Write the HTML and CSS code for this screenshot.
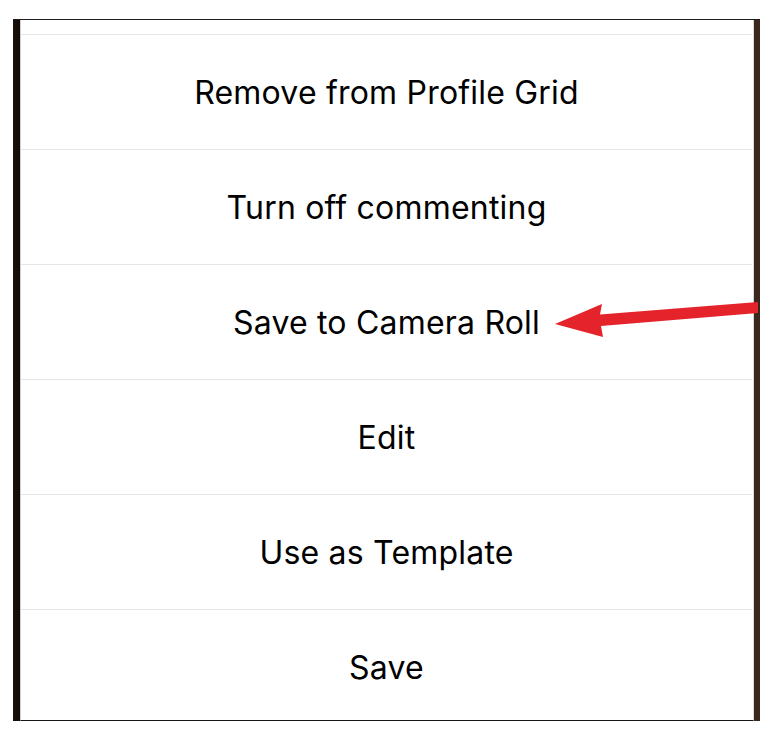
FILE: index.html
```html
<!DOCTYPE html>
<html>
<head>
<meta charset="utf-8">
<link rel="stylesheet" href="styles.css">
</head>
<body>
<div class="page">
  <div class="frame">
    <div class="sheet">
      <div class="top-gap"></div>
      <div class="item">Remove from Profile Grid</div>
      <div class="item">Turn off commenting</div>
      <div class="item">Save to Camera Roll</div>
      <div class="item">Edit</div>
      <div class="item">Use as Template</div>
      <div class="item">Save</div>
    </div>
  </div>
  <svg class="arrow" width="769" height="739" viewBox="0 0 769 739">
    <polygon points="555,324 602,304 600,314.5 758,302 758,313 601,326 603,337" fill="#e5232b"/>
  </svg>
</div>
</body>
</html>
```
FILE: styles.css
```css
html, body {
  margin: 0;
  padding: 0;
  background: #ffffff;
}
.page {
  position: relative;
  width: 769px;
  height: 739px;
  padding: 19px 0 0 13px;
  box-sizing: border-box;
}
.frame {
  width: 747px;
  height: 702px;
  box-sizing: border-box;
  border-top: 1px solid #1c1c1c;
  padding: 0 6px 0 7px;
  background: linear-gradient(90deg, #1a0f0a 0, #120a07 7px, #3a281d 7px, #3a281d 100%);
}
.sheet {
  height: 701px;
  box-sizing: border-box;
  background: #ffffff;
  border-bottom: 1px solid #151515;
  border-left: 1px solid #cfcfcf;
  border-right: 1px solid #d8d8d8;
  overflow: hidden;
  display: flex;
  flex-direction: column;
}
.top-gap {
  height: 14px;
  flex: none;
}
.item {
  flex: none;
  height: 114px;
  border-top: 1px solid #e6e6e6;
  display: flex;
  align-items: center;
  justify-content: center;
  font-family: Inter, "Liberation Sans", sans-serif;
  font-size: 32px;
  letter-spacing: 0.2px;
  color: #000000;
  margin: 0 1px 0 0;
}
.arrow {
  position: absolute;
  left: 0;
  top: 0;
}
```
